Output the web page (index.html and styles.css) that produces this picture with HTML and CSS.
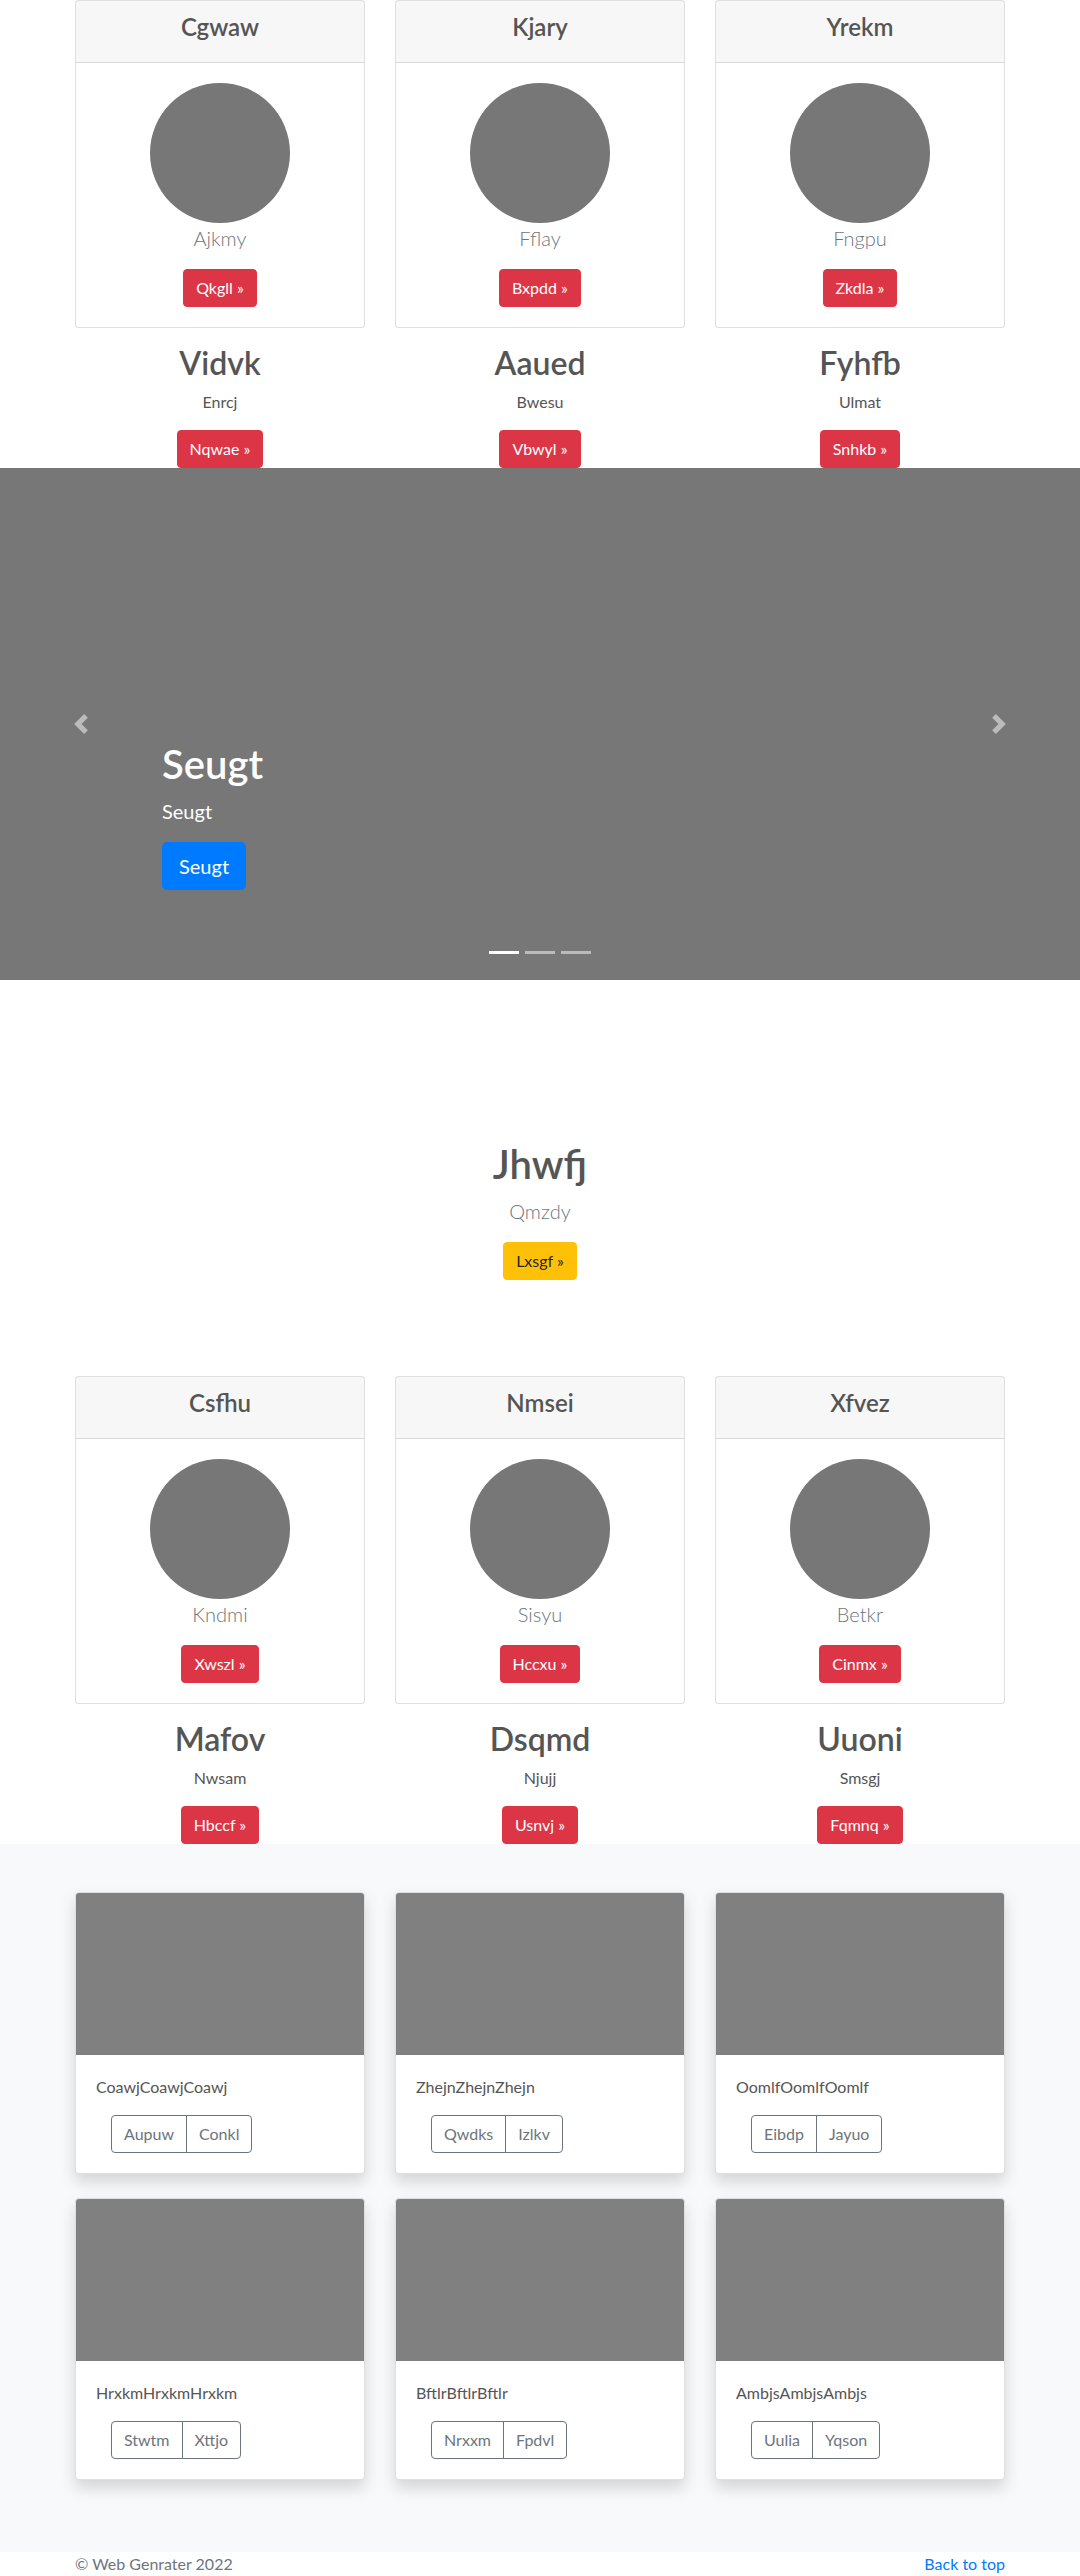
FILE: index.html
```html
<!DOCTYPE html>
<html lang="en">
<head>
<meta charset="utf-8">
<title>Web Genrater</title>
<link rel="stylesheet" href="styles.css">
</head>
<body>

<section class="team">
  <div class="container grid3">
    <div class="member">
      <div class="card">
        <div class="card-header"><h4 class="card-title">Cgwaw</h4></div>
        <div class="card-body">
          <div class="avatar"></div>
          <p class="lead">Ajkmy</p>
          <a class="btn btn-danger" href="#">Qkgll »</a>
        </div>
      </div>
      <h2 class="member-name">Vidvk</h2>
      <p class="member-role">Enrcj</p>
      <a class="btn btn-danger" href="#">Nqwae »</a>
    </div>
    <div class="member">
      <div class="card">
        <div class="card-header"><h4 class="card-title">Kjary</h4></div>
        <div class="card-body">
          <div class="avatar"></div>
          <p class="lead">Fflay</p>
          <a class="btn btn-danger" href="#">Bxpdd »</a>
        </div>
      </div>
      <h2 class="member-name">Aaued</h2>
      <p class="member-role">Bwesu</p>
      <a class="btn btn-danger" href="#">Vbwyl »</a>
    </div>
    <div class="member">
      <div class="card">
        <div class="card-header"><h4 class="card-title">Yrekm</h4></div>
        <div class="card-body">
          <div class="avatar"></div>
          <p class="lead">Fngpu</p>
          <a class="btn btn-danger" href="#">Zkdla »</a>
        </div>
      </div>
      <h2 class="member-name">Fyhfb</h2>
      <p class="member-role">Ulmat</p>
      <a class="btn btn-danger" href="#">Snhkb »</a>
    </div>
  </div>
</section>

<section class="carousel">
  <ol class="carousel-indicators">
    <li class="indicator active"></li>
    <li class="indicator"></li>
    <li class="indicator"></li>
  </ol>
  <div class="carousel-caption">
    <h1 class="caption-title">Seugt</h1>
    <p class="caption-text">Seugt</p>
    <a class="btn btn-lg btn-primary" href="#">Seugt</a>
  </div>
  <a class="carousel-control control-prev" href="#">
    <svg class="control-icon" viewBox="0 0 8 8" width="20" height="20"><path d="M5.25 0l-4 4 4 4 1.5-1.5L4.25 4l2.5-2.5L5.25 0z"/></svg>
  </a>
  <a class="carousel-control control-next" href="#">
    <svg class="control-icon" viewBox="0 0 8 8" width="20" height="20"><path d="M2.75 0l-1.5 1.5L3.75 4l-2.5 2.5L2.75 8l4-4-4-4z"/></svg>
  </a>
</section>

<section class="intro">
  <h1 class="intro-title">Jhwfj</h1>
  <p class="lead">Qmzdy</p>
  <a class="btn btn-warning" href="#">Lxsgf »</a>
</section>

<section class="team">
  <div class="container grid3">
    <div class="member">
      <div class="card">
        <div class="card-header"><h4 class="card-title">Csfhu</h4></div>
        <div class="card-body">
          <div class="avatar"></div>
          <p class="lead">Kndmi</p>
          <a class="btn btn-danger" href="#">Xwszl »</a>
        </div>
      </div>
      <h2 class="member-name">Mafov</h2>
      <p class="member-role">Nwsam</p>
      <a class="btn btn-danger" href="#">Hbccf »</a>
    </div>
    <div class="member">
      <div class="card">
        <div class="card-header"><h4 class="card-title">Nmsei</h4></div>
        <div class="card-body">
          <div class="avatar"></div>
          <p class="lead">Sisyu</p>
          <a class="btn btn-danger" href="#">Hccxu »</a>
        </div>
      </div>
      <h2 class="member-name">Dsqmd</h2>
      <p class="member-role">Njujj</p>
      <a class="btn btn-danger" href="#">Usnvj »</a>
    </div>
    <div class="member">
      <div class="card">
        <div class="card-header"><h4 class="card-title">Xfvez</h4></div>
        <div class="card-body">
          <div class="avatar"></div>
          <p class="lead">Betkr</p>
          <a class="btn btn-danger" href="#">Cinmx »</a>
        </div>
      </div>
      <h2 class="member-name">Uuoni</h2>
      <p class="member-role">Smsgj</p>
      <a class="btn btn-danger" href="#">Fqmnq »</a>
    </div>
  </div>
</section>

<section class="album">
  <div class="container grid3 album-grid">
    <div class="album-card">
      <div class="album-thumb"></div>
      <div class="album-body">
        <p class="album-text">CoawjCoawjCoawj</p>
        <div class="btn-group">
          <a class="btn btn-outline" href="#">Aupuw</a>
          <a class="btn btn-outline" href="#">Conkl</a>
        </div>
      </div>
    </div>
    <div class="album-card">
      <div class="album-thumb"></div>
      <div class="album-body">
        <p class="album-text">ZhejnZhejnZhejn</p>
        <div class="btn-group">
          <a class="btn btn-outline" href="#">Qwdks</a>
          <a class="btn btn-outline" href="#">Izlkv</a>
        </div>
      </div>
    </div>
    <div class="album-card">
      <div class="album-thumb"></div>
      <div class="album-body">
        <p class="album-text">OomlfOomlfOomlf</p>
        <div class="btn-group">
          <a class="btn btn-outline" href="#">Eibdp</a>
          <a class="btn btn-outline" href="#">Jayuo</a>
        </div>
      </div>
    </div>
    <div class="album-card">
      <div class="album-thumb"></div>
      <div class="album-body">
        <p class="album-text">HrxkmHrxkmHrxkm</p>
        <div class="btn-group">
          <a class="btn btn-outline" href="#">Stwtm</a>
          <a class="btn btn-outline" href="#">Xttjo</a>
        </div>
      </div>
    </div>
    <div class="album-card">
      <div class="album-thumb"></div>
      <div class="album-body">
        <p class="album-text">BftlrBftlrBftlr</p>
        <div class="btn-group">
          <a class="btn btn-outline" href="#">Nrxxm</a>
          <a class="btn btn-outline" href="#">Fpdvl</a>
        </div>
      </div>
    </div>
    <div class="album-card">
      <div class="album-thumb"></div>
      <div class="album-body">
        <p class="album-text">AmbjsAmbjsAmbjs</p>
        <div class="btn-group">
          <a class="btn btn-outline" href="#">Uulia</a>
          <a class="btn btn-outline" href="#">Yqson</a>
        </div>
      </div>
    </div>
  </div>
</section>

<footer class="footer container">
  <span class="footer-copy">© Web Genrater 2022</span>
  <a class="footer-link" href="#">Back to top</a>
</footer>

</body>
</html>
```

FILE: styles.css
```css
* { box-sizing: border-box; }

body {
  margin: 0;
  font-family: Lato, "Open Sans", "DejaVu Sans", sans-serif;
  font-size: 16px;
  line-height: 1.5;
  color: #555;
  background: #fff;
}

.container {
  width: 930px;
  margin: 0 auto;
}

.grid3 {
  display: grid;
  grid-template-columns: repeat(3, 1fr);
  column-gap: 30px;
}

/* team sections */
.member {
  display: flex;
  flex-direction: column;
  align-items: center;
  text-align: center;
}

.card {
  align-self: stretch;
  background: #fff;
  border: 1px solid rgba(0, 0, 0, .125);
  border-radius: 4px;
  display: flex;
  flex-direction: column;
}

.card-header {
  padding: 12px 20px;
  background: rgba(0, 0, 0, .03);
  border-bottom: 1px solid rgba(0, 0, 0, .125);
}

.card-title {
  margin: 0 0 8px;
  font-size: 24px;
  line-height: 28.8px;
  font-weight: 600;
}

.card-body {
  padding: 20px;
  display: flex;
  flex-direction: column;
  align-items: center;
}

.avatar {
  width: 140px;
  height: 140px;
  border-radius: 50%;
  background: #777;
}

.lead {
  margin: 0 0 16px;
  font-size: 20px;
  line-height: 30px;
  font-weight: 300;
  color: #6c757d;
}

.member-name {
  margin: 16px 0 8px;
  font-size: 32px;
  line-height: 38.4px;
  font-weight: 600;
}

.member-role {
  margin: 0 0 16px;
}

/* buttons */
.btn {
  display: inline-block;
  padding: 6px 12px;
  font-size: 16px;
  line-height: 24px;
  font-weight: 400;
  border: 1px solid transparent;
  border-radius: 4px;
  text-decoration: none;
  text-align: center;
  white-space: nowrap;
}

.btn-danger {
  background: #dc3545;
  border-color: #dc3545;
  color: #fff;
}

.btn-warning {
  background: #ffc107;
  border-color: #ffc107;
  color: #212529;
}

.btn-primary {
  background: #007bff;
  border-color: #007bff;
  color: #fff;
}

.btn-lg {
  padding: 8px 16px;
  font-size: 20px;
  line-height: 30px;
  border-radius: 4.8px;
}

.btn-outline {
  background: transparent;
  border-color: #6c757d;
  color: #6c757d;
}

/* carousel */
.carousel {
  position: relative;
  height: 512px;
  background: #777;
  overflow: hidden;
}

.carousel-caption {
  position: absolute;
  left: 15%;
  right: 15%;
  bottom: 48px;
  padding: 20px 0 42px;
  color: #fff;
  display: flex;
  flex-direction: column;
  align-items: flex-start;
}

.caption-title {
  margin: 0 0 8px;
  font-size: 40px;
  line-height: 48px;
  font-weight: 600;
}

.caption-text {
  margin: 0 0 16px;
  font-size: 20px;
  line-height: 30px;
}

.carousel-control {
  position: absolute;
  top: 0;
  bottom: 0;
  width: 15%;
  display: flex;
  align-items: center;
  justify-content: center;
  opacity: .5;
}

.control-prev { left: 0; }
.control-next { right: 0; }

.control-icon {
  display: block;
  fill: #fff;
}

.carousel-indicators {
  position: absolute;
  left: 15%;
  right: 15%;
  bottom: 0;
  margin: 0 0 16px;
  padding: 0;
  list-style: none;
  display: flex;
  justify-content: center;
}

.indicator {
  box-sizing: content-box;
  width: 30px;
  height: 3px;
  margin: 0 3px;
  background: #fff;
  background-clip: padding-box;
  border-top: 10px solid transparent;
  border-bottom: 10px solid transparent;
  opacity: .5;
}

.indicator.active { opacity: 1; }

/* intro */
.intro {
  padding: 160px 0 96px;
  display: flex;
  flex-direction: column;
  align-items: center;
  text-align: center;
}

.intro-title {
  margin: 0 0 8px;
  font-size: 40px;
  line-height: 48px;
  font-weight: 600;
}

/* album */
.album {
  background: #f8f9fa;
  padding: 48px 0 72px;
}

.album-grid {
  row-gap: 24px;
}

.album-card {
  background: #fff;
  border: 1px solid rgba(0, 0, 0, .125);
  border-radius: 4px;
  box-shadow: 0 8px 16px rgba(0, 0, 0, .15);
  overflow: hidden;
}

.album-thumb {
  height: 162px;
  background: #808080;
}

.album-body {
  padding: 20px;
  display: flex;
  flex-direction: column;
  align-items: flex-start;
}

.album-text {
  margin: 0 0 16px;
}

.btn-group {
  display: flex;
  margin-left: 15px;
}

.btn-group .btn:first-child {
  border-radius: 4px 0 0 4px;
}

.btn-group .btn:last-child {
  border-radius: 0 4px 4px 0;
  margin-left: -1px;
}

/* footer */
.footer {
  display: flex;
  justify-content: space-between;
  line-height: 24px;
}

.footer-copy { color: #6c757d; }

.footer-link {
  color: #007bff;
  text-decoration: none;
}
```
